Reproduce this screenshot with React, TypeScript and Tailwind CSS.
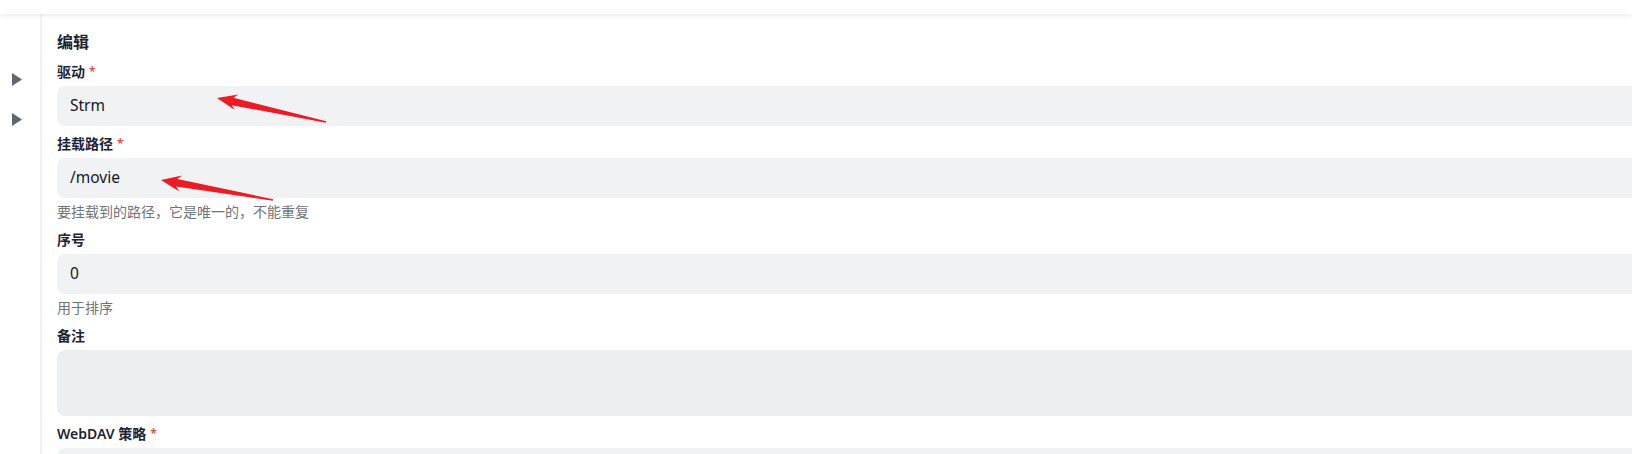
import React from "react";

type P = [number, number];

function arrowPoints(tip: P, tail: P): string {
  const dx = tail[0] - tip[0];
  const dy = tail[1] - tip[1];
  const len = Math.hypot(dx, dy);
  const d: P = [dx / len, dy / len];
  const n: P = [-d[1], d[0]];
  const at = (t: number, s: number): P => [tip[0] + d[0] * t + n[0] * s, tip[1] + d[1] * t + n[1] * s];
  const pts: P[] = [
    tip,
    at(20, -8),
    at(16, -3.8),
    [tail[0] - n[0] * 0.8, tail[1] - n[1] * 0.8],
    [tail[0] + n[0] * 0.8, tail[1] + n[1] * 0.8],
    at(16, 3.8),
    at(20, 8),
  ];
  return pts.map((p) => `${p[0].toFixed(1)},${p[1].toFixed(1)}`).join(" ");
}

function Triangle() {
  return (
    <svg width="10" height="13" viewBox="0 0 10 13">
      <polygon points="0,0 10,6.5 0,13" fill="#62666d" />
    </svg>
  );
}

function Label({ text, required }: { text: string; required?: boolean }) {
  return (
    <div className="text-sm leading-5 font-semibold text-[#1c2433]">
      {text}
      {required && <span className="text-[#ef4444] ml-[4px] text-[12px] align-top">*</span>}
    </div>
  );
}

function Input({ value }: { value?: string }) {
  return (
    <div className="mt-1 h-10 rounded-lg bg-[#f1f2f4] px-[13px] flex items-center text-[15.5px] text-[#111827] font-['Noto_Sans',sans-serif]">
      {value}
    </div>
  );
}

function Help({ text }: { text: string }) {
  return <div className="mt-1 text-sm leading-5 text-[#6f7479]">{text}</div>;
}

export default function App() {
  return (
    <div className="relative w-[1632px] h-[454px] overflow-hidden bg-white font-['Noto_Sans','Noto_Sans_CJK_SC',sans-serif]">
      <div className="relative z-10 h-[14px] bg-white shadow-[0_1px_5px_rgba(0,0,0,0.10)]" />
      <div className="flex">
        <aside className="w-[42px] h-[440px] shrink-0 border-r-2 border-[#f3f3f3] flex flex-col items-start pl-[12px] pt-[59px] gap-[27px]">
          <Triangle />
          <Triangle />
        </aside>
        <main className="w-[1700px] shrink-0 pl-[15px] pt-[16px] flex flex-col gap-2">
          <div className="text-base leading-6 font-bold text-[#1c2433]">编辑</div>
          <div>
            <Label text="驱动" required />
            <Input value="Strm" />
          </div>
          <div>
            <Label text="挂载路径" required />
            <Input value="/movie" />
            <Help text="要挂载到的路径，它是唯一的，不能重复" />
          </div>
          <div>
            <Label text="序号" />
            <Input value="0" />
            <Help text="用于排序" />
          </div>
          <div>
            <Label text="备注" />
            <div className="mt-1 h-[66px] rounded-lg bg-[#edeef0]" />
          </div>
          <div>
            <Label text="WebDAV 策略" required />
            <Input />
          </div>
        </main>
      </div>
      <svg className="absolute inset-0 pointer-events-none" width="1632" height="454">
        <polygon points={arrowPoints([217, 98], [326, 122])} fill="#ec1c24" />
        <polygon points={arrowPoints([161, 180], [273, 200])} fill="#ec1c24" />
      </svg>
    </div>
  );
}
